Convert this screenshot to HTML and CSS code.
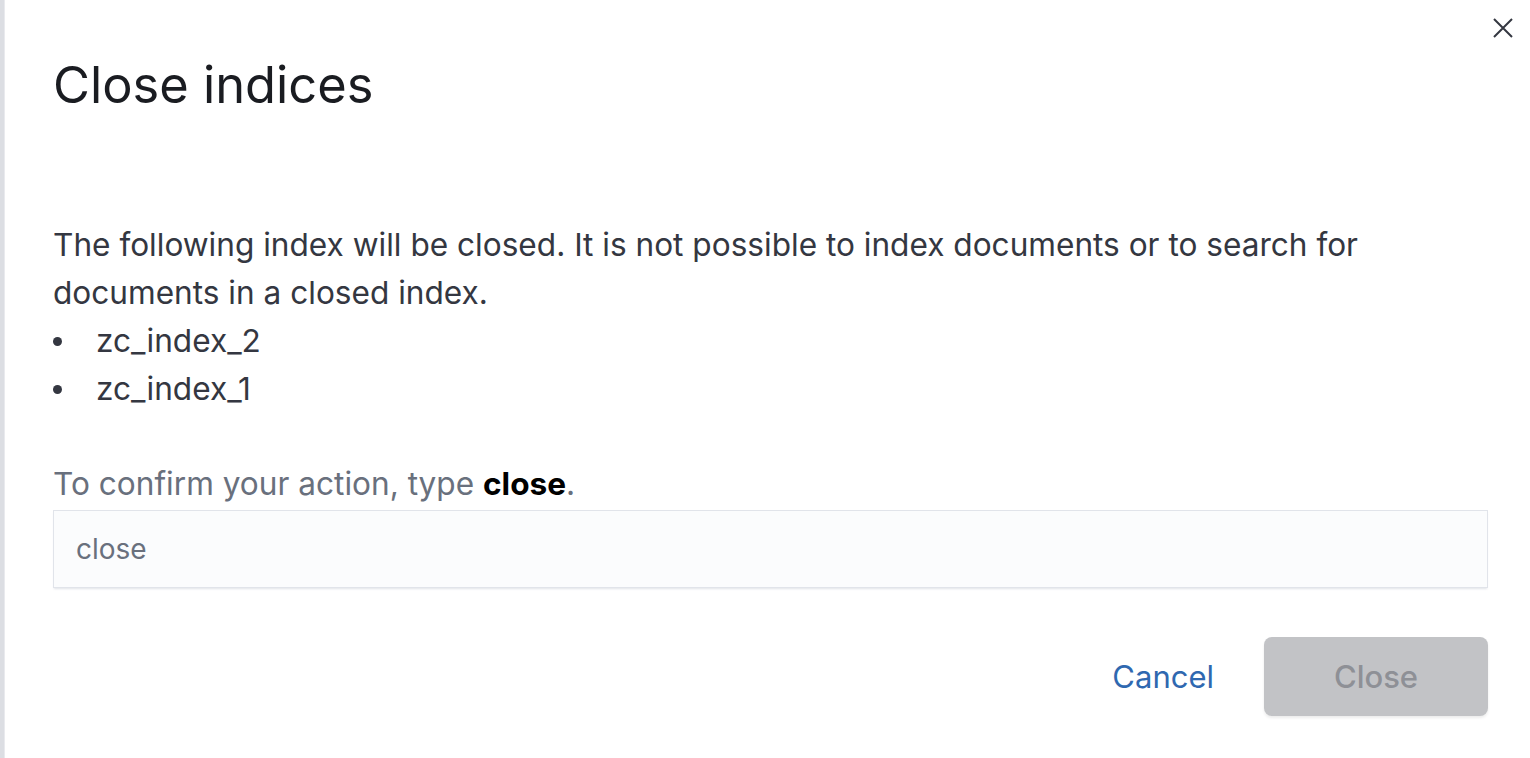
FILE: index.html
```html
<!DOCTYPE html>
<html lang="en">
<head>
<meta charset="utf-8">
<title>Close indices</title>
<link rel="stylesheet" href="styles.css">
</head>
<body>
<div class="page">
  <div class="edge"></div>
  <div class="modal">
    <button class="close-x" aria-label="Close">
      <svg width="22" height="22" viewBox="0 0 22 22"><path d="M2 2 L20 20 M20 2 L2 20" stroke="#343741" stroke-width="2" fill="none"/></svg>
    </button>
    <h1 class="title">Close indices</h1>
    <div class="body">
      <p class="desc">The following index will be closed. It is not possible to index documents or to search for documents in a closed index.</p>
      <ul class="list">
        <li>zc_index_2</li>
        <li>zc_index_1</li>
      </ul>
      <label class="confirm">To confirm your action, type <b>close</b>.</label>
      <input class="field" type="text" value="close">
    </div>
    <div class="footer">
      <button class="btn-link">Cancel</button>
      <button class="btn-fill">Close</button>
    </div>
  </div>
</div>
</body>
</html>
```
FILE: styles.css
```css
html, body {
  margin: 0;
  padding: 0;
  background: #ffffff;
  font-family: Inter, "Liberation Sans", sans-serif;
}
.page {
  display: flex;
  height: 758px;
  overflow: hidden;
}
.edge {
  width: 4px;
  flex: none;
  background: #dcdee3;
  border-right: 1px solid #e9eaee;
}
.modal {
  position: relative;
  flex: 1;
  padding: 50px 42px 0 48px;
}
.close-x {
  position: absolute;
  top: 17px;
  right: 16px;
  border: 0;
  background: none;
  padding: 0;
  width: 22px;
  height: 22px;
}
.title {
  margin: 0;
  font-size: 50.6px;
  line-height: 70px;
  font-weight: 400;
  color: #1a1c21;
}
.body {
  margin-top: 101px;
  color: #343741;
  font-size: 31.6px;
  line-height: 48px;
}
.desc {
  margin: 0;
  max-width: 1360px;
}
.list {
  margin: 0;
  padding: 0;
  list-style: none;
}
.list li {
  position: relative;
  padding-left: 43px;
}
.list li::before {
  content: "";
  position: absolute;
  left: 0;
  top: 20px;
  width: 9px;
  height: 9px;
  border-radius: 50%;
  background: #343741;
}
.confirm {
  display: block;
  margin-top: 47px;
  color: #69707d;
  line-height: 48px;
}
.confirm b {
  color: #000000;
  font-weight: 700;
}
.field {
  display: block;
  box-sizing: border-box;
  width: 100%;
  height: 78px;
  margin: 2px 0 0;
  padding: 0 22px;
  border: 1px solid #e1e4ea;
  background: #fbfcfd;
  box-shadow: 0 2px 2px -1px rgba(152,162,179,0.3);
  font-family: inherit;
  font-size: 28px;
  color: #69707d;
  outline: none;
}
.footer {
  display: flex;
  justify-content: flex-end;
  align-items: center;
  gap: 50px;
  margin-top: 49px;
}
.btn-link {
  border: 0;
  background: none;
  padding: 0;
  font-family: inherit;
  font-size: 31px;
  color: #2f68b0;
}
.btn-fill {
  width: 224px;
  height: 79px;
  border: 0;
  border-radius: 8px;
  background: #c2c3c6;
  box-shadow: 0 2px 3px rgba(0,0,0,0.08);
  font-family: inherit;
  font-size: 31px;
  font-weight: 500;
  color: #8e9096;
}
```
